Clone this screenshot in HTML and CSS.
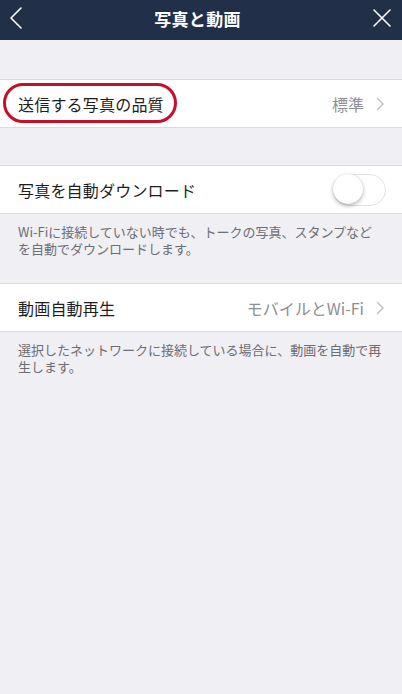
FILE: index.html
```html
<!DOCTYPE html>
<html lang="ja">
<head>
<meta charset="utf-8">
<title>写真と動画</title>
<link rel="stylesheet" href="styles.css">
</head>
<body>
<div class="screen">
  <header class="nav">
    <svg class="nav-back" width="14" height="24" viewBox="0 0 14 24"><path d="M12 2 L2 12 L12 22" fill="none" stroke="#ffffff" stroke-width="1.6" stroke-linecap="round" stroke-linejoin="round"/></svg>
    <div class="nav-title">写真と動画</div>
    <svg class="nav-close" width="20" height="20" viewBox="0 0 20 20"><path d="M2 2 L18 18 M18 2 L2 18" fill="none" stroke="#ffffff" stroke-width="1.6" stroke-linecap="round"/></svg>
  </header>

  <div class="group first">
    <div class="row">
      <span class="label">送信する写真の品質</span>
      <span class="value">標準</span>
      <svg class="chev" width="9" height="14" viewBox="0 0 9 14"><path d="M1.5 1.5 L7 7 L1.5 12.5" fill="none" stroke="#c4c4c9" stroke-width="1.6" stroke-linecap="round" stroke-linejoin="round"/></svg>
      <span class="highlight"></span>
    </div>
  </div>

  <div class="group">
    <div class="row">
      <span class="label">写真を自動ダウンロード</span>
      <span class="toggle"><span class="knob"></span></span>
    </div>
  </div>
  <p class="note">Wi-Fiに接続していない時でも、トークの写真、スタンプなどを自動でダウンロードします。</p>

  <div class="group third">
    <div class="row">
      <span class="label">動画自動再生</span>
      <span class="value">モバイルとWi-Fi</span>
      <svg class="chev" width="9" height="14" viewBox="0 0 9 14"><path d="M1.5 1.5 L7 7 L1.5 12.5" fill="none" stroke="#c4c4c9" stroke-width="1.6" stroke-linecap="round" stroke-linejoin="round"/></svg>
    </div>
  </div>
  <p class="note">選択したネットワークに接続している場合に、動画を自動で再生します。</p>
</div>
</body>
</html>
```

FILE: styles.css
```css
html, body {
  margin: 0;
  padding: 0;
  background: #efeff4;
}
body {
  font-family: "Noto Sans CJK JP", "Noto Sans", "Liberation Sans", sans-serif;
  color: #222222;
}
.screen {
  width: 402px;
  min-height: 694px;
  background: #efeff4;
}
.nav {
  height: 40px;
  background: #222f48;
  display: flex;
  align-items: center;
  justify-content: space-between;
  padding: 0 10px 0 9px;
  box-sizing: border-box;
}
.nav-back {
  display: block;
  margin-top: -4px;
}
.nav-close {
  display: block;
  margin-top: -4px;
}
.nav-title {
  color: #ffffff;
  font-size: 17px;
  font-weight: 700;
  letter-spacing: 0.3px;
  margin-top: -3px;
}
.group {
  background: #ffffff;
  border-top: 1px solid #dcdce0;
  border-bottom: 1px solid #dcdce0;
}
.group.first {
  margin-top: 39px;
}
.group + .group {
  margin-top: 37px;
}
.group.third {
  margin-top: 0;
}
.row {
  position: relative;
  height: 47px;
  display: flex;
  align-items: center;
  padding: 0 17px 0 18px;
}
.label {
  flex: 1;
  font-size: 16px;
  color: #1e1e1e;
  letter-spacing: 0.2px;
}
.value {
  font-size: 16px;
  color: #8e8e93;
  margin-right: 12px;
}
.chev {
  display: block;
}
.highlight {
  position: absolute;
  left: 3px;
  top: 3px;
  width: 168px;
  height: 34px;
  border: 3px solid #c5102c;
  border-radius: 20px;
}
.toggle {
  position: relative;
  width: 51px;
  height: 30px;
  border-radius: 16px;
  border: 1.5px solid #e3e3e6;
  background: #ffffff;
  margin-right: -1px;
}
.knob {
  position: absolute;
  left: -1px;
  top: -1px;
  width: 30px;
  height: 30px;
  border-radius: 50%;
  background: #ffffff;
  box-shadow: 0 2px 4px rgba(0,0,0,0.28), 0 0 0 0.5px rgba(0,0,0,0.08);
}
.note {
  margin: 0;
  padding: 9px 19px 26px 18px;
  font-size: 13px;
  line-height: 17px;
  color: #6d6d72;
}
```
